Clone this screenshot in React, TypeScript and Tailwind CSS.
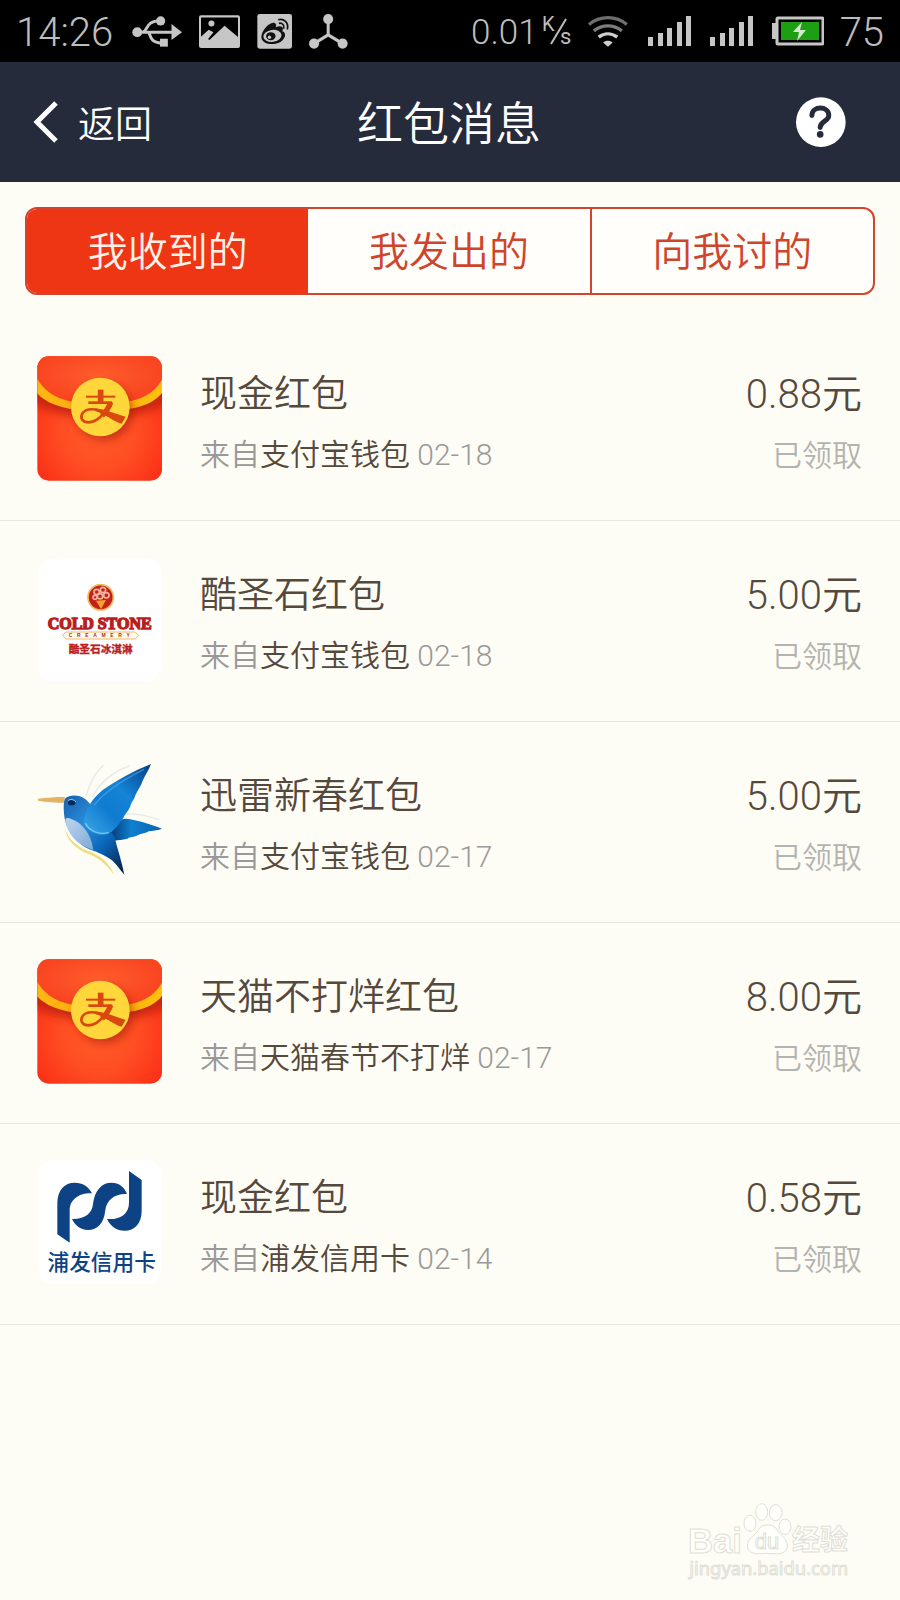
import React from "react";
import { clsx } from "clsx";

const EnvelopeIcon = ({ id }: { id: string }) => (
  <svg viewBox="51 49 375 375" className="size-full" aria-hidden="true">
    <defs>
      <radialGradient id={`${id}-body`} cx="50%" cy="60%" r="60%">
        <stop offset="0" stopColor="#ff5b28" />
        <stop offset="0.5" stopColor="#ff4e23" />
        <stop offset="1" stopColor="#fb3016" />
      </radialGradient>
      <radialGradient id={`${id}-flap`} cx="50%" cy="40%" r="60%">
        <stop offset="0" stopColor="#ff5c2b" />
        <stop offset="1" stopColor="#f8421f" />
      </radialGradient>
      <linearGradient id={`${id}-band`}>
        <stop offset="0" stopColor="#fdb813" />
        <stop offset="0.5" stopColor="#ffa60f" />
        <stop offset="1" stopColor="#fdc20d" />
      </linearGradient>
      <filter id={`${id}-blur`} x="-20%" y="-20%" width="140%" height="160%">
        <feGaussianBlur stdDeviation="12" />
      </filter>
      <clipPath id={`${id}-clip`}>
        <rect x="52" y="50" width="374" height="373" rx="34" />
      </clipPath>
    </defs>
    <g clipPath={`url(#${id}-clip)`}>
      <rect x="51" y="49" width="375" height="375" fill={`url(#${id}-body)`} />
      <path d="M30 186 C85 214 150 234 239 234 S395 214 450 186 V120 H30Z" fill="#bf200d" opacity="0.85" filter={`url(#${id}-blur)`} />
      <path d="M51 49 H426 V130 C395 180 320 196 239 196 S85 180 51 130Z" fill={`url(#${id}-flap)`} />
      <path d="M51 116 C78 164 120 180 165 188 H313 C360 180 402 164 426 120 V160 C400 192 360 204 313 210 H165 C120 204 78 190 51 161Z" fill={`url(#${id}-band)`} />
      <circle cx="252" cy="216" r="86" fill="#a81a08" opacity="0.6" filter={`url(#${id}-blur)`} />
    </g>
    <circle cx="241" cy="202" r="88" fill="#ffd73b" />
    <g fill="none" stroke="#d9480f">
      <path d="M198 171 H286" strokeWidth="6" />
      <path d="M242 150 V188" strokeWidth="17" />
      <path d="M205 189 H277" strokeWidth="8" />
      <path d="M270 188 C258 214 240 246 206 248 C184 248 180 232 188 220 C202 202 232 208 262 220" strokeWidth="8" />
      <path d="M272 188 C266 206 258 216 246 228" strokeWidth="16" />
    </g>
    <path d="M226 206 C262 210 290 225 317 231 L305 252 C280 246 258 224 226 214Z" fill="#d9480f" />
  </svg>
);

const ColdStoneIcon = () => (
  <svg viewBox="51 51 375 375" className="size-full" role="img" aria-label="Cold Stone Creamery">
    <rect x="55" y="55" width="368" height="368" rx="44" fill="#fff" />
    <circle cx="242" cy="172" r="38" fill="#c4201c" stroke="#f0b95c" strokeWidth="5" />
    <g fill="none" stroke="#f6b49c" strokeWidth="5">
      <circle cx="230" cy="156" r="8" />
      <circle cx="249" cy="150" r="8" />
      <circle cx="259" cy="166" r="8" />
      <circle cx="240" cy="169" r="8" />
      <circle cx="225" cy="172" r="6" />
    </g>
    <path d="M228 182 L258 180 L243 207Z" fill="#f2a52d" />
    <g fill="#b91d1d" stroke="#b91d1d" fontWeight="700">
      <g fontSize="48" strokeWidth="4" fontFamily="'Liberation Serif', serif">
        <text x="83" y="266">COLD</text>
        <text x="233" y="266">STONE</text>
      </g>
      <path d="M138 276 H346 L356 286 L346 297 H138 L128 286Z" fill="#fffdf2" stroke="#f0b95c" strokeWidth="3" />
      <text x="146" y="292" fontSize="15" strokeWidth="0" letterSpacing="14" fontFamily="'Liberation Sans', sans-serif">CREAMERY</text>
      <text x="146" y="339" fontSize="32" strokeWidth="1" fontFamily="'Noto Sans CJK SC', sans-serif">酷圣石冰淇淋</text>
    </g>
  </svg>
);

const BirdIcon = () => (
  <svg viewBox="51 54 375 375" className="size-full" aria-hidden="true">
    <defs>
      <linearGradient id="bird-wing" x1="0" y1="1" x2="1" y2="0">
        <stop offset="0" stopColor="#3fa9e8" />
        <stop offset="0.35" stopColor="#0f7bd0" />
        <stop offset="0.6" stopColor="#1583d6" />
        <stop offset="1" stopColor="#053f87" />
      </linearGradient>
      <linearGradient id="bird-back" x1="0" y1="0.5" x2="1" y2="0.5">
        <stop offset="0" stopColor="#043a79" />
        <stop offset="0.4" stopColor="#1080cf" />
        <stop offset="1" stopColor="#0b62ae" />
      </linearGradient>
      <linearGradient id="bird-body" x1="0.1" y1="0" x2="0.9" y2="1">
        <stop offset="0" stopColor="#1767b4" />
        <stop offset="0.35" stopColor="#2b8edc" />
        <stop offset="0.65" stopColor="#0a66b8" />
        <stop offset="1" stopColor="#06244c" />
      </linearGradient>
      <linearGradient id="bird-belly" x1="0" y1="0" x2="1" y2="1">
        <stop offset="0" stopColor="#bcd6ee" />
        <stop offset="1" stopColor="#7fa9d6" />
      </linearGradient>
    </defs>
    <g fill="none" stroke="#e4eae8" strokeWidth="4">
      <path d="M198 168 C208 132 226 98 250 76" />
      <path d="M216 172 C240 128 276 96 328 78" />
      <path d="M320 222 C356 220 386 228 418 240" />
    </g>
    <path d="M134 260 C142 300 180 326 218 338 C250 352 272 376 282 404 C256 368 230 352 206 342 C166 326 138 300 134 260Z" fill="#efdc7c" />
    <path d="M54 176 C82 173 108 171 134 171 L134 188 C108 188 80 186 54 182Z" fill="#e3b463" />
    <path d="M272 278 C286 250 298 236 318 236 C352 240 392 252 426 266 C410 272 398 272 386 274 C378 280 366 280 352 286 C344 292 330 290 322 296 C308 300 294 300 282 302Z" fill="url(#bird-back)" />
    <path d="M134 236 C130 206 130 186 136 175 C150 163 178 164 194 176 C206 184 216 198 228 220 L284 290 C290 320 302 350 313 404 C296 386 286 364 262 352 C240 340 226 334 216 331 C176 316 142 280 134 236Z" fill="url(#bird-body)" />
    <path d="M136 240 C136 232 144 232 156 238 C188 250 214 284 220 330 C176 316 142 286 136 240Z" fill="url(#bird-belly)" />
    <path d="M192 250 C194 206 216 178 248 150 C288 122 342 92 393 72 C386 92 374 108 368 122 C364 138 352 150 346 166 C344 178 334 186 332 196 C326 214 316 220 310 234 C298 252 284 272 262 282 C234 290 204 274 192 250Z" fill="url(#bird-wing)" />
    <path d="M196 250 C208 272 236 286 266 278" fill="none" stroke="#7bc8f4" strokeWidth="4" />
    <path d="M222 196 C252 156 312 118 372 88" fill="none" stroke="#55aee8" strokeWidth="4" opacity="0.6" />
    <ellipse cx="155" cy="188" rx="11" ry="8" fill="#062a55" />
    <path d="M144 182 C150 176 162 178 168 186" fill="none" stroke="#8fc6f0" strokeWidth="3" />
  </svg>
);

const SpdIcon = () => (
  <svg viewBox="51 60 375 375" className="size-full" role="img" aria-label="浦发信用卡">
    <rect x="55" y="60" width="368" height="372" rx="44" fill="#fff" />
    <g fill="#0d4384">
      <path d="M112 283 V190 C112 150 134 128 164 128 C188 128 206 140 216 160 C184 158 149 174 149 212 V308Z" />
      <path d="M156 237 C192 238 216 222 219 192 C224 150 246 128 274 128 C298 128 314 142 321 162 C284 160 260 180 256 210 C252 250 232 270 204 270 C184 270 166 258 156 237Z" />
      <path d="M327 93 L365 120 V212 C365 250 344 272 314 272 C290 272 272 260 261 237 C300 240 327 222 327 188Z" />
      <text x="245" y="389" fontSize="65" textAnchor="middle" fontWeight="500" fontFamily="'Noto Sans CJK SC', sans-serif">浦发信用卡</text>
    </g>
  </svg>
);

const tabs = ["我收到的", "我发出的", "向我讨的"];

const packets = [
  { title: "现金红包", from: "支付宝钱包", date: "02-18", amount: "0.88", icon: <EnvelopeIcon id="cash" /> },
  { title: "酷圣石红包", from: "支付宝钱包", date: "02-18", amount: "5.00", icon: <ColdStoneIcon /> },
  { title: "迅雷新春红包", from: "支付宝钱包", date: "02-17", amount: "5.00", icon: <BirdIcon /> },
  { title: "天猫不打烊红包", from: "天猫春节不打烊", date: "02-17", amount: "8.00", icon: <EnvelopeIcon id="tmall" /> },
  { title: "现金红包", from: "浦发信用卡", date: "02-14", amount: "0.58", icon: <SpdIcon /> },
];

const SignalIcon = () => (
  <svg viewBox="0 0 44 30" className="h-[30px] w-[44px]" fill="#c6c6c6" aria-hidden="true">
    <rect x="0" y="21" width="5" height="9" />
    <rect x="10" y="17" width="5" height="13" />
    <rect x="19" y="12" width="5" height="18" />
    <rect x="29" y="6" width="5" height="24" />
    <rect x="38" y="0" width="5" height="30" />
  </svg>
);

const StatusBar = () => (
  <div className="flex h-[62px] items-center justify-between bg-black px-4 text-[#bdbdbd]">
    <div className="flex items-center">
      <span className="w-[116px] pt-1 text-[40px] leading-[58px]">14:26</span>
      {/* usb */}
      <svg viewBox="395 46 152 94" className="h-[31px] w-[50px]" fill="#c6c6c6" aria-hidden="true">
        <g fill="none" stroke="#c6c6c6" strokeWidth="9">
          <path d="M410 95 H520" />
          <path d="M428 95 C444 90 436 60 482 60" />
          <path d="M446 95 C452 110 452 128 490 128" />
        </g>
        <circle cx="411" cy="95" r="15" />
        <circle cx="482" cy="61" r="14" />
        <rect x="480" y="115" width="24" height="24" />
        <path d="M515 70 L547 95 L515 119Z" />
      </svg>
      {/* picture */}
      <svg viewBox="598 46 122 98" className="ml-[17px] h-[33px] w-[41px]" aria-hidden="true">
        <rect x="601" y="50" width="116" height="91" rx="3" fill="none" stroke="#c6c6c6" strokeWidth="6" />
        <circle cx="635" cy="71" r="9" fill="#c6c6c6" />
        <path d="M602 112 L627 90 L641 97 L625 117 L629 120 L674 78 L716 113 V140 H602Z" fill="#c6c6c6" />
      </svg>
      {/* weibo */}
      <svg viewBox="770 42 104 104" className="ml-[17px] size-[35px]" aria-hidden="true">
        <rect x="771" y="42" width="103" height="103" rx="7" fill="#c6c6c6" />
        <path d="M783 109 C785 90 804 69 818 68 C827 68 828 75 826 81 C836 77 848 77 847 87 L845 93 C856 97 855 107 850 114 C842 128 824 133 808 131 C793 130 782 121 783 109Z" fill="#111" />
        <ellipse cx="816" cy="107" rx="27" ry="18" transform="rotate(-8 816 107)" fill="#c6c6c6" />
        <ellipse cx="811" cy="108" rx="14" ry="12" fill="#111" />
        <circle cx="807" cy="111" r="5" fill="#c6c6c6" />
        <g fill="none" stroke="#111" strokeWidth="5">
          <path d="M833 59 C850 54 865 68 860 88" />
          <path d="M835 70 C845 67 853 76 849 86" />
        </g>
      </svg>
      {/* share node */}
      <svg viewBox="925 42 116 104" className="ml-[17px] h-[35px] w-[39px]" fill="#c6c6c6" aria-hidden="true">
        <path d="M982 60 V104 L940 130 M982 104 L1025 130" fill="none" stroke="#c6c6c6" strokeWidth="9" />
        <circle cx="982" cy="57" r="15" />
        <circle cx="940" cy="130" r="15" />
        <circle cx="1025" cy="130" r="15" />
      </svg>
    </div>
    <div className="flex items-center">
      <span className="pt-1 text-[35px] leading-[58px]">0.01</span>
      <svg viewBox="0 0 30 36" className="ml-1 h-[36px] w-[30px]" fill="#bdbdbd" role="img" aria-label="K/s">
        <text x="0" y="18" fontSize="20" fontWeight="400">K</text>
        <path d="M9 31 L24 6" stroke="#bdbdbd" strokeWidth="2" />
        <text x="18" y="31" fontSize="22" fontWeight="400">s</text>
      </svg>
      {/* wifi */}
      <svg viewBox="415 46 120 94" className="ml-4 h-[31px] w-[40px]" fill="none" strokeWidth="10" aria-hidden="true">
        <path d="M417 72 C450 44 500 44 532 72" stroke="#6e6e6e" />
        <path d="M432 91 C458 71 492 71 517 91" stroke="#7c7c7c" />
        <path d="M447 110 C464 97 485 97 503 110" stroke="#d0d0d0" />
        <path d="M460 126 C468 119 481 119 489 126 L475 139Z" fill="#d0d0d0" />
      </svg>
      <div className="ml-5 flex gap-[18px]">
        <SignalIcon />
        <SignalIcon />
      </div>
      {/* battery */}
      <svg viewBox="0 0 52 30" className="ml-[18px] h-[30px] w-[52px]" aria-hidden="true">
        <rect x="0" y="7" width="5" height="16" fill="#c6c6c6" />
        <rect x="5" y="2" width="46" height="26" rx="1" fill="none" stroke="#c6c6c6" strokeWidth="3" />
        <rect x="9" y="6" width="38" height="18" fill="#1c9f12" />
        <path d="M30 6 L21 16 H27 L25 25 L34 14 H28Z" fill="#d5e8d0" />
      </svg>
      <span className="ml-4 pt-1 text-[40px] leading-[58px]">75</span>
    </div>
  </div>
);

const Header = () => (
  <header className="grid h-[120px] grid-cols-3 items-center bg-[#252b3b] pl-8 pr-[54px] text-white">
    <button type="button" className="flex items-center gap-5 justify-self-start text-[37px] font-normal">
      <svg viewBox="0 0 26 44" className="h-[44px] w-[26px]" fill="none" stroke="currentColor" strokeWidth="5" aria-hidden="true">
        <path d="M24 3 L5 22 L24 41" />
      </svg>
      <span className="pt-2">返回</span>
    </button>
    <h1 className="justify-self-center pl-5 pt-1 text-[46px] leading-[60px]">红包消息</h1>
    <button type="button" aria-label="帮助" className="justify-self-end">
      <svg viewBox="1035 291 151 151" className="size-[50px]" aria-hidden="true">
        <circle cx="1110" cy="367" r="75" fill="#fff" />
        <path d="M1083 347 C1083 317 1134 317 1134 347 C1134 365 1108 363 1108 383" fill="none" stroke="#252b3b" strokeWidth="15" strokeLinecap="round" />
        <circle cx="1108" cy="404" r="10" fill="#252b3b" />
      </svg>
    </button>
  </header>
);

const Watermark = () => (
  <footer className="mb-[18px] mr-12 mt-auto self-end">
    <svg viewBox="55 60 495 246" className="h-[82px] w-[165px]" fill="#fffffb" stroke="#dedfd6" strokeWidth="3" role="img" aria-label="Baidu 经验">
      <g fontFamily="'Liberation Sans', sans-serif">
        <text x="58" y="218" fontSize="104" fontWeight="700">Bai</text>
        <path d="M236 196 C238 172 262 166 270 148 C280 130 314 130 324 148 C332 166 358 174 356 200 C352 226 322 222 296 220 C268 222 238 226 236 196Z" />
        <ellipse cx="244" cy="130" rx="18" ry="24" />
        <ellipse cx="279" cy="96" rx="18" ry="25" />
        <ellipse cx="321" cy="98" rx="19" ry="24" />
        <ellipse cx="349" cy="140" rx="18" ry="23" />
        <text x="258" y="208" fontSize="66" fontWeight="400">du</text>
      </g>
      <text x="370" y="210" fontSize="84" fontWeight="700" fontFamily="'Noto Sans CJK SC', sans-serif">经验</text>
      <text x="62" y="286" fontSize="55" fontWeight="400" fontFamily="'Noto Sans', sans-serif">jingyan.baidu.com</text>
    </svg>
  </footer>
);

const App = () => {
  const [active, setActive] = React.useState(0);

  return (
    <div className="flex min-h-screen flex-col bg-[#fefdf5] font-['Roboto','Noto_Sans_CJK_SC_DemiLight','Noto_Sans_CJK_SC',sans-serif] font-light">
      <StatusBar />
      <Header />
      <nav className="m-[25px] flex h-[88px] overflow-hidden rounded-xl border-2 border-[#d2452c] bg-[#fffefa]">
        {tabs.map((tab, i) => (
          <button
            key={tab}
            type="button"
            onClick={() => setActive(i)}
            className={clsx(
              "flex-1 border-[#d2452c] pt-1 text-[40px]",
              i === 2 && "border-l-2",
              i === active ? "bg-[#ee3615] text-[#fff1e8]" : "text-[#cf452b]"
            )}
          >
            {tab}
          </button>
        ))}
      </nav>
      <ul>
        {packets.map((packet, i) => (
          <li key={i} className="flex h-[201px] border-b border-[#e6e5de] pl-[37px] pr-[38px] pt-9">
            <div className="size-[125px] shrink-0">{packet.icon}</div>
            <div className="ml-[38px] flex-1 pt-[3px]">
              <h2 className="text-[37px] font-normal leading-[72px] text-[#55493d]">{packet.title}</h2>
              <p className="text-[30px] leading-[48px] text-[#999]">
                来自<span className="font-normal text-[#55493d]">{packet.from}</span> {packet.date}
              </p>
            </div>
            <div className="pt-[3px] text-right">
              <p className="text-[40px] leading-[72px] text-[#55493d]">{packet.amount}元</p>
              <p className="text-[30px] leading-[50px] text-[#b3b3b0]">已领取</p>
            </div>
          </li>
        ))}
      </ul>
      <Watermark />
    </div>
  );
};

export default App;
